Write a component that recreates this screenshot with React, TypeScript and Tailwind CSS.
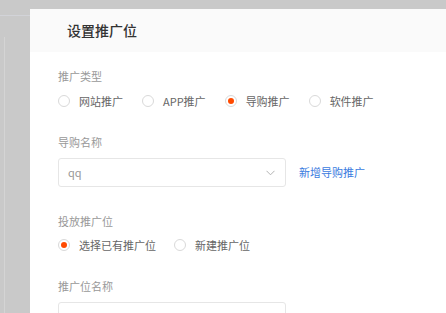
import { useState } from 'react'

const font = { fontFamily: '"Noto Sans CJK SC", "Noto Sans", sans-serif' }

function Radio({ label, checked, onClick }: { label: string; checked?: boolean; onClick?: () => void }) {
  return (
    <button type="button" onClick={onClick} className="flex items-center h-[18px] gap-[9px]">
      <span className="flex h-[12px] w-[12px] items-center justify-center rounded-full border border-[#d9d9d9] bg-white">
        {checked && <span className="h-[6px] w-[6px] rounded-full bg-[#ff4a00]" />}
      </span>
      <span className="text-[11px] leading-[18px] text-[#666]">{label}</span>
    </button>
  )
}

export default function App() {
  const [type, setType] = useState('导购推广')
  const [slot, setSlot] = useState('existing')

  return (
    <div className="relative flex h-[313px] w-[446px] overflow-hidden bg-[#c9c9c9]" style={font}>
      {/* dimmed page behind the modal */}
      <div className="w-[30px] shrink-0 pt-[15px]">
        <div className="h-px w-full bg-[#d2d3d8]" />
        <div className="ml-[4px] mt-[21px] h-[276px] w-px bg-[#d4d4d4]" />
      </div>

      <div className="mt-[9px] flex-1 bg-white">
        <div className="flex h-[43px] items-center bg-[#fafafa] pl-[37px]">
          <span className="text-[14px] font-medium text-[#333]">设置推广位</span>
        </div>

        <div className="pl-[28px]">
          <div className="mt-[16px] text-[11px] leading-[16px] text-[#999]">推广类型</div>
          <div className="mt-[8px] flex gap-[19px]">
            {['网站推广', 'APP推广', '导购推广', '软件推广'].map((t) => (
              <Radio key={t} label={t} checked={type === t} onClick={() => setType(t)} />
            ))}
          </div>

          <div className="mt-[24px] text-[11px] leading-[16px] text-[#999]">导购名称</div>
          <div className="mt-[8px] flex items-center gap-[13px]">
            <div className="flex h-[29px] w-[228px] items-center justify-between rounded-[3px] border border-[#e6e6e6] pl-[9px] pr-[10px]">
              <span className="text-[11px] text-[#999]">qq</span>
              <svg width="9" height="6" viewBox="0 0 9 6" fill="none">
                <path d="M0.5 0.8 L4.5 4.8 L8.5 0.8" stroke="#b3b3b3" strokeWidth="1" />
              </svg>
            </div>
            <a className="text-[11px] text-[#3a7be0]">新增导购推广</a>
          </div>

          <div className="mt-[26px] text-[11px] leading-[16px] text-[#999]">投放推广位</div>
          <div className="mt-[7px] flex gap-[18px]">
            <Radio label="选择已有推广位" checked={slot === 'existing'} onClick={() => setSlot('existing')} />
            <Radio label="新建推广位" checked={slot === 'new'} onClick={() => setSlot('new')} />
          </div>

          <div className="mt-[24px] text-[11px] leading-[16px] text-[#999]">推广位名称</div>
          <div className="mt-[8px] h-[29px] w-[228px] rounded-[3px] border border-[#e6e6e6]" />
        </div>
      </div>
    </div>
  )
}
